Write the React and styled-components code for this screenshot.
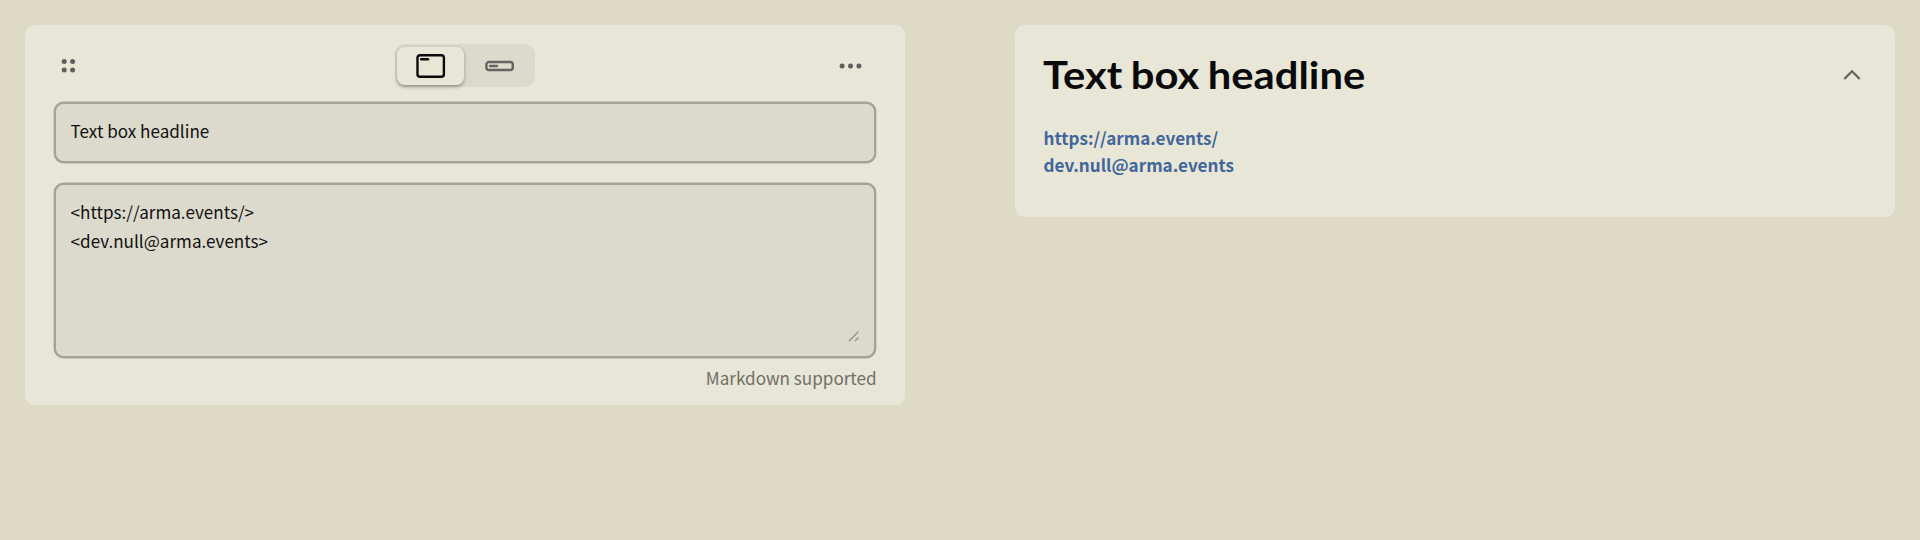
import React from "react";
import styled, { createGlobalStyle } from "styled-components";

const Global = createGlobalStyle`
  * { box-sizing: border-box; }
  body {
    margin: 0;
    background: #dddbc5;
    color: #111;
    font-family: "Noto Sans CJK SC", sans-serif;
    font-size: 17.08px;
  }
`;

const Page = styled.main`
  display: flex;
  justify-content: space-between;
  align-items: flex-start;
  min-height: 540px;
  padding: 25px 25.2px;
`;

const Card = styled.section`
  width: 879.6px;
  height: ${(p) => p.$height}px;
  border-radius: 9.6px;
  background: #e8e6d7;
  display: flex;
  flex-direction: column;
`;

const Toolbar = styled.div`
  display: grid;
  grid-template-columns: 1fr auto 1fr;
  align-items: center;
  height: 43px;
  margin: 19px 29px 0;
`;

const ToolButton = styled.button`
  display: flex;
  padding: 0;
  border: 0;
  background: none;
  justify-self: ${(p) => p.$side};
  color: #605f5b;
`;

const Segments = styled.div`
  display: flex;
  width: 140.4px;
  height: 43px;
  padding: 2.5px;
  gap: 2px;
  border-radius: 10px;
  background: #dcdacc;
`;

const Segment = styled.button`
  flex: 1;
  display: flex;
  align-items: center;
  justify-content: center;
  padding: 0;
  border: 0;
  border-radius: 7.5px;
  color: ${(p) => (p.$active ? "#0a0a0a" : "#64635f")};
  background: ${(p) => (p.$active ? "#e8e6d7" : "transparent")};
  box-shadow: ${(p) => (p.$active ? "0 1.6px 3.6px rgba(0, 0, 0, 0.34)" : "none")};
`;

const fieldStyle = `
  display: block;
  width: 822px;
  margin-left: 28.8px;
  border: 2px solid #a5a398;
  border-radius: 9.6px;
  background: #dcdacc;
  box-shadow: 0 0 0 0.4px #a5a398;
  color: #111;
  font: inherit;
  outline: none;
`;

const Input = styled.input`
  ${fieldStyle}
  height: 61.5px;
  margin-top: 14.5px;
  padding: 0 14.6px 4px;
`;

const AreaFrame = styled.div`
  ${fieldStyle}
  position: relative;
  height: 175.4px;
  margin-top: 19.5px;
  padding: 13.4px 14.6px;
`;

const Area = styled.textarea`
  display: block;
  width: 100%;
  height: 144px;
  padding: 0;
  border: 0;
  outline: none;
  background: transparent;
  color: inherit;
  font: inherit;
  line-height: 28.8px;
  resize: none;
`;

const ResizeMark = styled.svg`
  position: absolute;
  right: 13.5px;
  bottom: 14.2px;
`;

const Hint = styled.div`
  margin: 8.4px 28.2px 0;
  line-height: 24px;
  text-align: right;
  color: #706f68;
`;

const PreviewHead = styled.header`
  display: flex;
  align-items: center;
  justify-content: space-between;
  height: 46px;
  margin: 27px 34px 0 28.2px;
`;

const Headline = styled.h2`
  margin: -3px 0 0;
  font-family: Lato, sans-serif;
  font-size: 38.4px;
  font-weight: 700;
  line-height: 46px;
  white-space: nowrap;
  color: #0a0a0a;
  word-spacing: -1.5px;
  transform: scaleX(1.087);
  transform-origin: left;
`;

const Links = styled.div`
  display: flex;
  flex-direction: column;
  align-items: flex-start;
  margin: 27.3px 28.4px 0;
`;

const Link = styled.a`
  color: #42659a;
  font-weight: 700;
  line-height: 26.4px;
  text-decoration: none;
`;

const GripIcon = () => (
  <svg width="29" height="29" viewBox="0 0 29 29" fill="currentColor">
    {[10.2, 18.6].map((x) =>
      [10.6, 19].map((y) => <circle key={`${x}-${y}`} cx={x} cy={y} r="2.5" />)
    )}
  </svg>
);

const MoreIcon = () => (
  <svg width="38" height="29" viewBox="0 0 38 29" fill="currentColor">
    {[4.1, 12.5, 20.9].map((x) => (
      <circle key={x} cx={x} cy="14.9" r="2.5" />
    ))}
  </svg>
);

const PanelIcon = () => (
  <svg width="30" height="26" viewBox="0 0 30 26" fill="none" stroke="currentColor" strokeWidth="2.4">
    <rect x="1.5" y="2.2" width="26.4" height="21.6" rx="2.6" />
    <path d="M5.2 6.2h6.8" strokeLinecap="round" />
  </svg>
);

const BarIcon = () => (
  <svg width="30" height="12" viewBox="0 0 30 12" fill="none" stroke="currentColor" strokeWidth="2.4">
    <rect x="2.4" y="2" width="26.4" height="8" rx="2.6" />
    <path d="M6.1 6h6.8" strokeLinecap="round" />
  </svg>
);

const ChevronIcon = () => (
  <svg width="18" height="12" viewBox="0 0 18 12" fill="none" stroke="#64635f" strokeWidth="2.3">
    <path d="M1.3 10 9 2.3l7.7 7.7" />
  </svg>
);

export default function App() {
  return (
    <>
      <Global />
      <Page>
        <Card $height={380}>
          <Toolbar>
            <ToolButton $side="start" aria-label="Move"><GripIcon /></ToolButton>
            <Segments>
              <Segment $active aria-label="Panel"><PanelIcon /></Segment>
              <Segment aria-label="Bar"><BarIcon /></Segment>
            </Segments>
            <ToolButton $side="end" aria-label="More"><MoreIcon /></ToolButton>
          </Toolbar>
          <Input defaultValue="Text box headline" />
          <AreaFrame>
            <Area spellCheck={false} defaultValue={"<https://arma.events/>\n<dev.null@arma.events>"} />
            <ResizeMark width="12" height="12" viewBox="0 0 12 12" stroke="#8b8a82" strokeWidth="1.1">
              <path d="M1 11 10.5 1.5M7 11l3.5-3.5" />
            </ResizeMark>
          </AreaFrame>
          <Hint>Markdown supported</Hint>
        </Card>
        <Card $height={192}>
          <PreviewHead>
            <Headline>Text box headline</Headline>
            <ChevronIcon />
          </PreviewHead>
          <Links>
            <Link>https://arma.events/</Link>
            <Link>dev.null@arma.events</Link>
          </Links>
        </Card>
      </Page>
    </>
  );
}
